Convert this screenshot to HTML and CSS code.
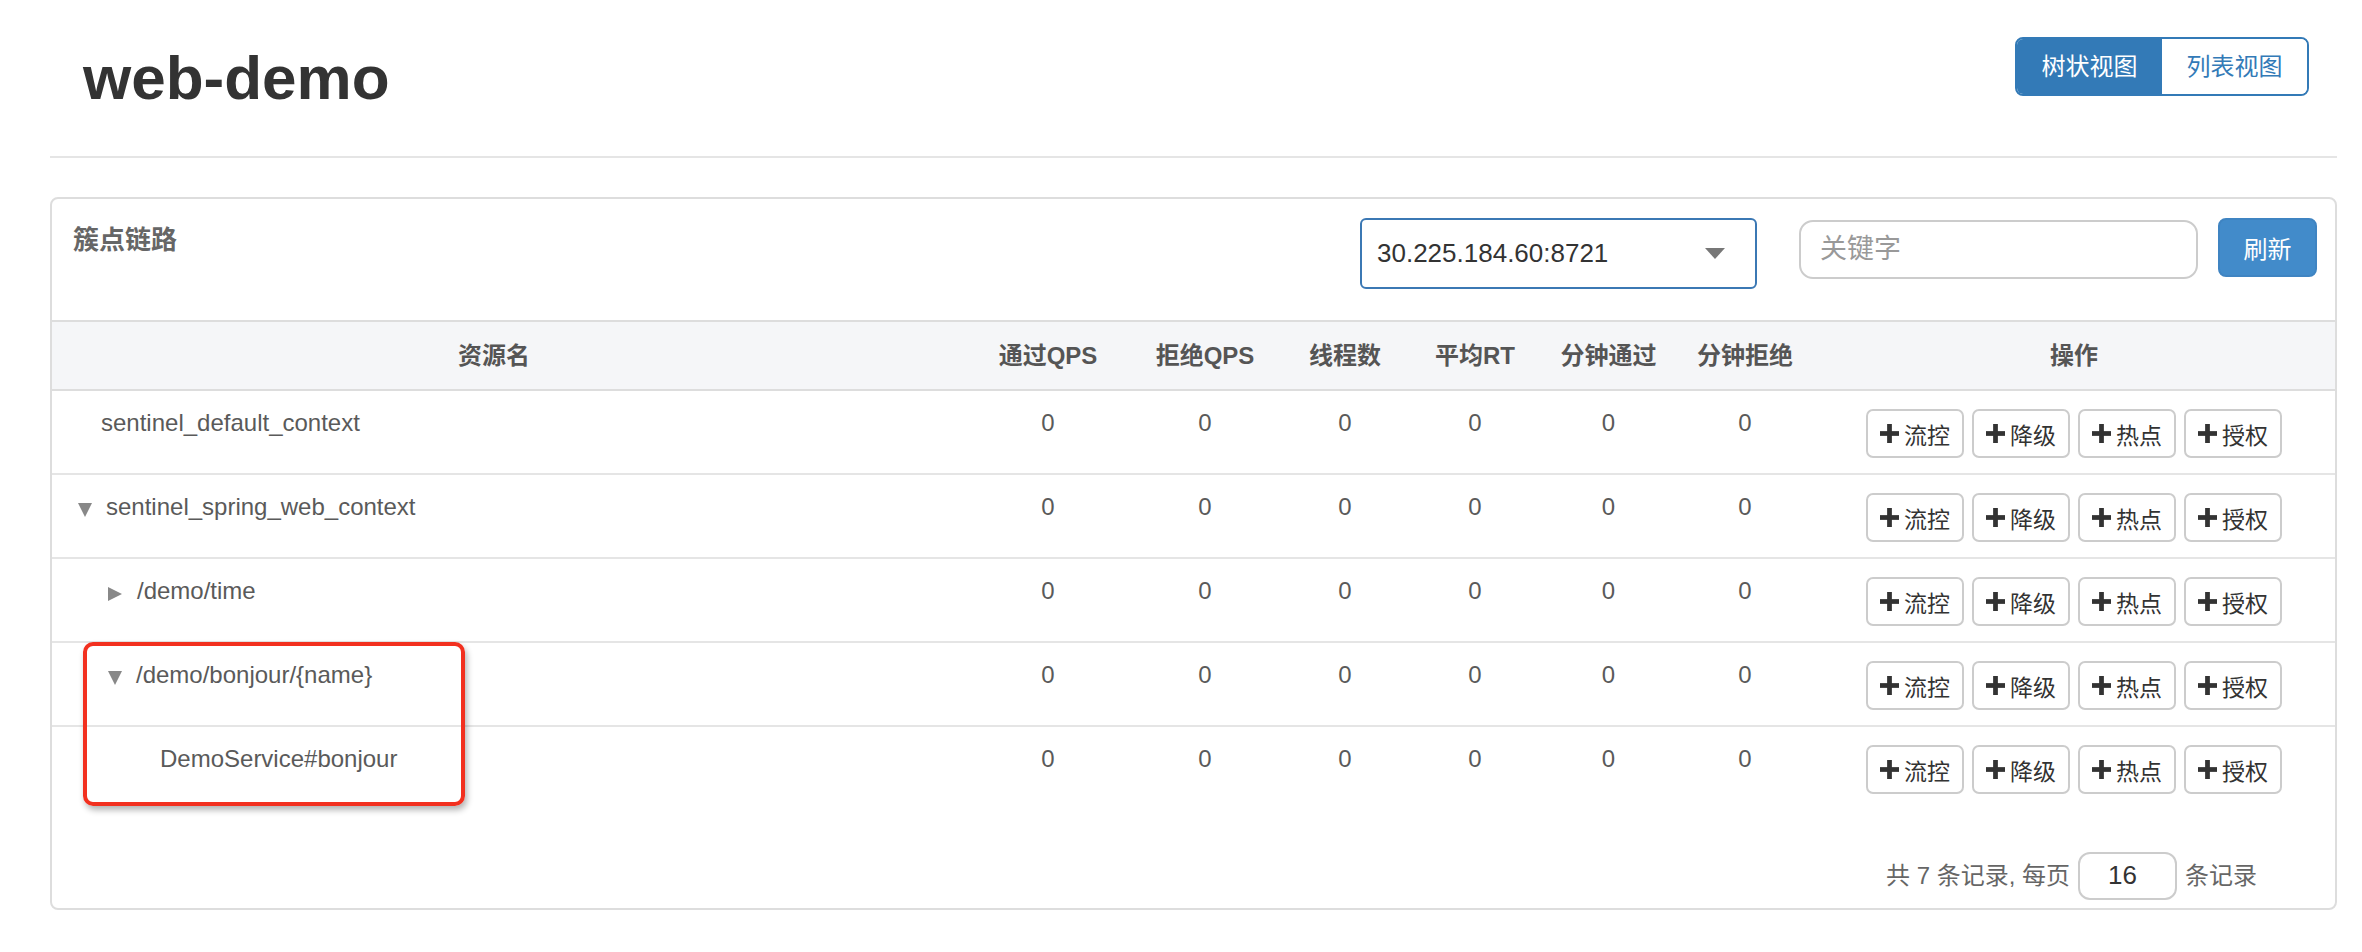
FILE: index.html
```html
<!DOCTYPE html>
<html lang="zh-CN">
<head>
<meta charset="utf-8">
<title>web-demo</title>
<link rel="stylesheet" href="styles.css">
</head>
<body>
<div class="page">
  <header class="top">
    <h1 class="app-title">web-demo</h1>
    <div class="view-switch">
      <button class="view-btn active">树状视图</button>
      <button class="view-btn">列表视图</button>
    </div>
  </header>
  <div class="divider"></div>

  <section class="panel">
    <div class="panel-head">
      <h2 class="panel-title">簇点链路</h2>
      <div class="machine-select">
        <span>30.225.184.60:8721</span>
        <span class="select-caret"></span>
      </div>
      <input class="keyword" type="text" placeholder="关键字">
      <button class="refresh">刷新</button>
    </div>

    <div class="grid">
      <div class="row head">
        <div class="cell name-head">资源名</div>
        <div class="cell">通过QPS</div>
        <div class="cell">拒绝QPS</div>
        <div class="cell">线程数</div>
        <div class="cell">平均RT</div>
        <div class="cell">分钟通过</div>
        <div class="cell">分钟拒绝</div>
        <div class="cell">操作</div>
      </div>

      <div class="row">
        <div class="cell name lvl0">sentinel_default_context</div>
        <div class="cell">0</div><div class="cell">0</div><div class="cell">0</div>
        <div class="cell">0</div><div class="cell">0</div><div class="cell">0</div>
        <div class="cell ops">
          <button class="op"><svg class="plus" viewBox="0 0 20 20"><rect x="0" y="7.5" width="20" height="5"/><rect x="7.5" y="0" width="5" height="20"/></svg>流控</button>
          <button class="op"><svg class="plus" viewBox="0 0 20 20"><rect x="0" y="7.5" width="20" height="5"/><rect x="7.5" y="0" width="5" height="20"/></svg>降级</button>
          <button class="op"><svg class="plus" viewBox="0 0 20 20"><rect x="0" y="7.5" width="20" height="5"/><rect x="7.5" y="0" width="5" height="20"/></svg>热点</button>
          <button class="op"><svg class="plus" viewBox="0 0 20 20"><rect x="0" y="7.5" width="20" height="5"/><rect x="7.5" y="0" width="5" height="20"/></svg>授权</button>
        </div>
      </div>

      <div class="row">
        <div class="cell name lvl0c"><span class="caret down"></span>sentinel_spring_web_context</div>
        <div class="cell">0</div><div class="cell">0</div><div class="cell">0</div>
        <div class="cell">0</div><div class="cell">0</div><div class="cell">0</div>
        <div class="cell ops">
          <button class="op"><svg class="plus" viewBox="0 0 20 20"><rect x="0" y="7.5" width="20" height="5"/><rect x="7.5" y="0" width="5" height="20"/></svg>流控</button>
          <button class="op"><svg class="plus" viewBox="0 0 20 20"><rect x="0" y="7.5" width="20" height="5"/><rect x="7.5" y="0" width="5" height="20"/></svg>降级</button>
          <button class="op"><svg class="plus" viewBox="0 0 20 20"><rect x="0" y="7.5" width="20" height="5"/><rect x="7.5" y="0" width="5" height="20"/></svg>热点</button>
          <button class="op"><svg class="plus" viewBox="0 0 20 20"><rect x="0" y="7.5" width="20" height="5"/><rect x="7.5" y="0" width="5" height="20"/></svg>授权</button>
        </div>
      </div>

      <div class="row">
        <div class="cell name lvl1c"><span class="caret right"></span>/demo/time</div>
        <div class="cell">0</div><div class="cell">0</div><div class="cell">0</div>
        <div class="cell">0</div><div class="cell">0</div><div class="cell">0</div>
        <div class="cell ops">
          <button class="op"><svg class="plus" viewBox="0 0 20 20"><rect x="0" y="7.5" width="20" height="5"/><rect x="7.5" y="0" width="5" height="20"/></svg>流控</button>
          <button class="op"><svg class="plus" viewBox="0 0 20 20"><rect x="0" y="7.5" width="20" height="5"/><rect x="7.5" y="0" width="5" height="20"/></svg>降级</button>
          <button class="op"><svg class="plus" viewBox="0 0 20 20"><rect x="0" y="7.5" width="20" height="5"/><rect x="7.5" y="0" width="5" height="20"/></svg>热点</button>
          <button class="op"><svg class="plus" viewBox="0 0 20 20"><rect x="0" y="7.5" width="20" height="5"/><rect x="7.5" y="0" width="5" height="20"/></svg>授权</button>
        </div>
      </div>

      <div class="row">
        <div class="cell name lvl1c"><span class="caret down"></span>/demo/bonjour/{name}</div>
        <div class="cell">0</div><div class="cell">0</div><div class="cell">0</div>
        <div class="cell">0</div><div class="cell">0</div><div class="cell">0</div>
        <div class="cell ops">
          <button class="op"><svg class="plus" viewBox="0 0 20 20"><rect x="0" y="7.5" width="20" height="5"/><rect x="7.5" y="0" width="5" height="20"/></svg>流控</button>
          <button class="op"><svg class="plus" viewBox="0 0 20 20"><rect x="0" y="7.5" width="20" height="5"/><rect x="7.5" y="0" width="5" height="20"/></svg>降级</button>
          <button class="op"><svg class="plus" viewBox="0 0 20 20"><rect x="0" y="7.5" width="20" height="5"/><rect x="7.5" y="0" width="5" height="20"/></svg>热点</button>
          <button class="op"><svg class="plus" viewBox="0 0 20 20"><rect x="0" y="7.5" width="20" height="5"/><rect x="7.5" y="0" width="5" height="20"/></svg>授权</button>
        </div>
      </div>

      <div class="row last">
        <div class="cell name lvl2">DemoService#bonjour</div>
        <div class="cell">0</div><div class="cell">0</div><div class="cell">0</div>
        <div class="cell">0</div><div class="cell">0</div><div class="cell">0</div>
        <div class="cell ops">
          <button class="op"><svg class="plus" viewBox="0 0 20 20"><rect x="0" y="7.5" width="20" height="5"/><rect x="7.5" y="0" width="5" height="20"/></svg>流控</button>
          <button class="op"><svg class="plus" viewBox="0 0 20 20"><rect x="0" y="7.5" width="20" height="5"/><rect x="7.5" y="0" width="5" height="20"/></svg>降级</button>
          <button class="op"><svg class="plus" viewBox="0 0 20 20"><rect x="0" y="7.5" width="20" height="5"/><rect x="7.5" y="0" width="5" height="20"/></svg>热点</button>
          <button class="op"><svg class="plus" viewBox="0 0 20 20"><rect x="0" y="7.5" width="20" height="5"/><rect x="7.5" y="0" width="5" height="20"/></svg>授权</button>
        </div>
      </div>
    </div>

    <div class="pager">
      <span>共 7 条记录, 每页</span>
      <input class="page-size" type="text" value="16">
      <span>条记录</span>
    </div>
  </section>
</div>
<div class="annotation"></div>
</body>
</html>
```

FILE: styles.css
```css
html, body {
  margin: 0;
  padding: 0;
  background: #fff;
}
body {
  font-family: "Liberation Sans", "Noto Sans CJK SC", sans-serif;
  color: #5a5a5a;
  position: relative;
  width: 2362px;
  height: 952px;
  overflow: hidden;
}
button, input {
  font-family: "Liberation Sans", "Noto Sans CJK SC", sans-serif;
}

.page {
  padding: 0 25px 0 50px;
}

/* top bar */
.top {
  height: 156px;
  display: flex;
  justify-content: space-between;
  align-items: flex-start;
}
.app-title {
  margin: 45px 0 0 33px;
  font-size: 62px;
  line-height: 66px;
  font-weight: bold;
  color: #333;
}
.view-switch {
  margin: 37px 28px 0 0;
  display: flex;
  border: 2px solid #337ab7;
  border-radius: 8px;
  overflow: hidden;
  height: 59px;
  box-sizing: border-box;
}
.view-btn {
  width: 145px;
  border: 0;
  background: #fff;
  color: #337ab7;
  font-size: 24px;
  line-height: 55px;
  padding: 0;
}
.view-btn.active {
  background: #337ab7;
  color: #fff;
}

.divider {
  height: 2px;
  background: #e5e5e5;
}

/* panel */
.panel {
  margin-top: 39px;
  border: 2px solid #ddd;
  border-radius: 8px;
}
.panel-head {
  height: 123px;
  box-sizing: border-box;
  border-bottom: 2px solid #ddd;
  padding: 19px 18px 0 21px;
  display: flex;
  align-items: flex-start;
}
.panel-title {
  flex: 1;
  margin: 0;
  font-size: 26px;
  line-height: 44px;
  font-weight: bold;
  color: #666;
}
.machine-select {
  width: 397px;
  height: 71px;
  box-sizing: border-box;
  border: 2px solid #3b78b4;
  border-radius: 6px;
  padding: 0 30px 0 15px;
  margin-right: 42px;
  display: flex;
  align-items: center;
  justify-content: space-between;
  font-size: 26px;
  color: #333;
}
.select-caret {
  width: 0;
  height: 0;
  border-left: 10px solid transparent;
  border-right: 10px solid transparent;
  border-top: 11px solid #777;
}
.keyword {
  width: 399px;
  height: 59px;
  box-sizing: border-box;
  margin: 2px 20px 0 0;
  border: 2px solid #ccc;
  border-radius: 14px;
  padding: 0 0 0 19px;
  font-size: 27px;
  color: #333;
  outline: none;
}
.keyword::placeholder {
  color: #999;
}
.refresh {
  width: 99px;
  height: 59px;
  box-sizing: border-box;
  border: 2px solid #3f84c2;
  border-radius: 8px;
  background: #428bca;
  color: #fff;
  font-size: 24px;
  padding: 0;
}

/* grid table */
.row {
  display: grid;
  grid-template-columns: 914px 164px 150px 130px 130px 137px 136px 1fr;
  height: 84px;
  box-sizing: border-box;
  border-bottom: 2px solid #e5e5e5;
}
.row.last {
  border-bottom: 0;
}
.row.head {
  height: 69px;
  background: #f5f6f8;
  border-bottom: 2px solid #ddd;
  font-weight: bold;
  color: #555;
}
.row.head .cell {
  padding-top: 0;
  line-height: 67px;
}
.cell {
  font-size: 24px;
  line-height: 34px;
  padding-top: 15px;
  text-align: center;
  white-space: nowrap;
}
.cell.name-head {
  padding-right: 30px;
}
.cell.name {
  text-align: left;
}
.lvl0 { padding-left: 49px; }
.lvl0c { padding-left: 26px; }
.lvl1c { padding-left: 56px; }
.lvl2 { padding-left: 108px; }

.caret {
  display: inline-block;
  width: 0;
  height: 0;
  margin-right: 14px;
  vertical-align: -2px;
}
.caret.down {
  border-left: 7.5px solid transparent;
  border-right: 7.5px solid transparent;
  border-top: 14px solid #888;
}
.caret.right {
  border-top: 7.5px solid transparent;
  border-bottom: 7.5px solid transparent;
  border-left: 14px solid #888;
  margin-right: 15px;
}

.cell.ops {
  padding-top: 18px;
  display: flex;
  justify-content: center;
  align-items: flex-start;
  gap: 8px;
}
.op {
  height: 49px;
  box-sizing: border-box;
  border: 2px solid #ccc;
  border-radius: 7px;
  background: #fff;
  color: #333;
  font-size: 23px;
  padding: 0 12px;
  display: flex;
  align-items: center;
}
.plus {
  width: 19px;
  height: 19px;
  fill: #333;
  margin-right: 5px;
}

/* pager */
.pager {
  height: 97px;
  box-sizing: border-box;
  padding: 32px 78px 0 0;
  display: flex;
  justify-content: flex-end;
  align-items: center;
  align-content: flex-start;
  font-size: 24px;
  color: #666;
}
.pager span {
  line-height: 48px;
}
.page-size {
  width: 99px;
  height: 48px;
  box-sizing: border-box;
  margin: 0 8px;
  border: 2px solid #ccc;
  border-radius: 12px;
  padding: 0 0 0 28px;
  font-size: 26px;
  color: #333;
  outline: none;
}

/* red annotation frame drawn over the table */
.annotation {
  position: absolute;
  left: 83px;
  top: 642px;
  width: 382px;
  height: 164px;
  box-sizing: border-box;
  border: 4px solid #f2301f;
  border-radius: 10px;
  box-shadow: 2px 4px 6px rgba(0, 0, 0, 0.3);
}
```
